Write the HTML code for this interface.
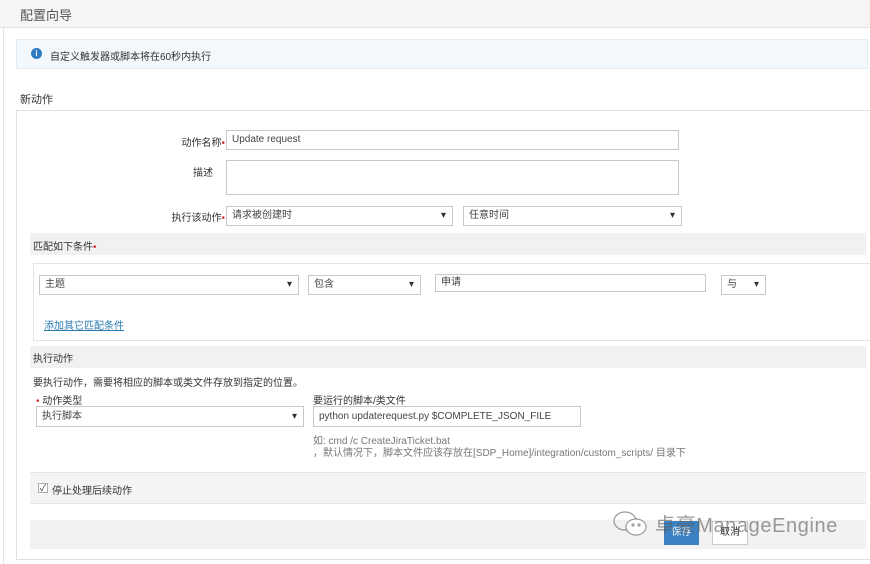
<!DOCTYPE html>
<html><head><meta charset="utf-8"><style>
*{box-sizing:border-box;margin:0;padding:0}
body{width:870px;height:564px;background:#fff;font-family:"Liberation Sans","Noto Sans CJK SC",sans-serif;font-size:10px;color:#333;position:relative;overflow:hidden}
.a{position:absolute}
.in{position:absolute;border:1px solid #c8c8c8;background:#fff;padding:0 5px;font-size:10px;color:#444;line-height:18px}
.sel::after{content:"▾";position:absolute;right:6px;top:0;font-size:10px;color:#333}
.band{position:absolute;background:#f1f1f1;left:30px;width:836px}
</style></head><body>
<div class="a" style="left:0;top:0;width:870px;height:28px;background:#f5f5f5;border-bottom:1px solid #e4e4e4"></div>
<div class="a" style="left:20px;top:5px;font-size:13px;color:#555">配置向导</div>
<div class="a" style="left:3px;top:28px;width:1px;height:536px;background:#e2e2e2"></div>
<div class="a" style="left:16px;top:39px;width:852px;height:30px;background:#f2f8fc;border:1px solid #e3eef4"></div>
<div class="a" style="left:31px;top:48px;width:11px;height:11px;border-radius:50%;background:#2f7dc0;color:#fff;font-size:8px;text-align:center;line-height:11px;font-weight:bold">i</div>
<div class="a" style="left:50px;top:48px;font-size:10px">自定义触发器或脚本将在60秒内执行</div>
<div class="a" style="left:20px;top:91px;font-size:11px">新动作</div>
<div class="a" style="left:16px;top:110px;width:854px;height:450px;border:1px solid #e0e0e0;border-right:none"></div>
<div class="a" style="left:150px;top:134px;width:75px;text-align:right">动作名称<span style="color:#c33">•</span></div>
<div class="in" style="left:226px;top:130px;width:453px;height:20px">Update request</div>
<div class="a" style="left:150px;top:164px;width:63px;text-align:right">描述</div>
<div class="in" style="left:226px;top:160px;width:453px;height:35px"></div>
<div class="a" style="left:140px;top:209px;width:85px;text-align:right">执行该动作<span style="color:#c33">•</span></div>
<div class="in sel" style="left:226px;top:206px;width:227px;height:20px">请求被创建时</div>
<div class="in sel" style="left:463px;top:206px;width:219px;height:20px">任意时间</div>
<div class="band" style="top:233px;height:22px"></div>
<div class="a" style="left:33px;top:238px">匹配如下条件<span style="color:#c33">•</span></div>
<div class="a" style="left:33px;top:263px;width:837px;height:78px;border:1px solid #e4e4e4;border-right:none"></div>
<div class="in sel" style="left:39px;top:275px;width:260px;height:20px">主题</div>
<div class="in sel" style="left:308px;top:275px;width:113px;height:20px">包含</div>
<div class="in" style="left:435px;top:274px;width:271px;height:18px;line-height:16px">申请</div>
<div class="in sel" style="left:721px;top:275px;width:45px;height:20px">与</div>
<div class="a" style="left:44px;top:317px;color:#2a7ab0;text-decoration:underline">添加其它匹配条件</div>
<div class="band" style="top:346px;height:22px"></div>
<div class="a" style="left:33px;top:350px">执行动作</div>
<div class="a" style="left:33px;top:374px">要执行动作，需要将相应的脚本或类文件存放到指定的位置。</div>
<div class="a" style="left:36px;top:392px"><span style="color:#c33">•</span> 动作类型</div>
<div class="in sel" style="left:36px;top:406px;width:268px;height:21px;line-height:19px">执行脚本</div>
<div class="a" style="left:313px;top:392px">要运行的脚本/类文件</div>
<div class="in" style="left:313px;top:406px;width:268px;height:21px;line-height:19px">python updaterequest.py $COMPLETE_JSON_FILE</div>
<div class="a" style="left:313px;top:432px;color:#777">如: cmd /c CreateJiraTicket.bat</div>
<div class="a" style="left:313px;top:444px;color:#777">，默认情况下，脚本文件应该存放在[SDP_Home]/integration/custom_scripts/ 目录下</div>
<div class="band" style="top:472px;height:32px;background:#f4f4f4;border-top:1px solid #e4e4e4;border-bottom:1px solid #e4e4e4"></div>
<div class="a" style="left:38px;top:483px;width:10px;height:10px;border:1px solid #aaa;background:#fff;font-size:9px;line-height:8px;text-align:center">✓</div>
<div class="a" style="left:52px;top:482px">停止处理后续动作</div>
<div class="band" style="top:520px;height:29px;background:#f2f2f2"></div>
<div class="a" style="left:664px;top:521px;width:35px;height:24px;background:#3b82c4;color:#fff;text-align:center;line-height:24px">保存</div>
<div class="a" style="left:712px;top:521px;width:36px;height:24px;background:#fff;border:1px solid #ccc;text-align:center;line-height:22px">取消</div>
<svg class="a" style="left:612px;top:510px" width="36" height="28" viewBox="0 0 36 28" fill="none" stroke="rgba(110,110,110,0.7)" stroke-width="1.2"><ellipse cx="13" cy="11" rx="11" ry="9"/><ellipse cx="24" cy="17" rx="10" ry="8" fill="#fff"/><circle cx="21" cy="15" r="1"/><circle cx="27" cy="15" r="1"/></svg>
<div class="a" style="left:655px;top:509px;font-size:20px;color:rgba(90,90,90,0.6);letter-spacing:0.6px">卓豪ManageEngine</div>
</body></html>
